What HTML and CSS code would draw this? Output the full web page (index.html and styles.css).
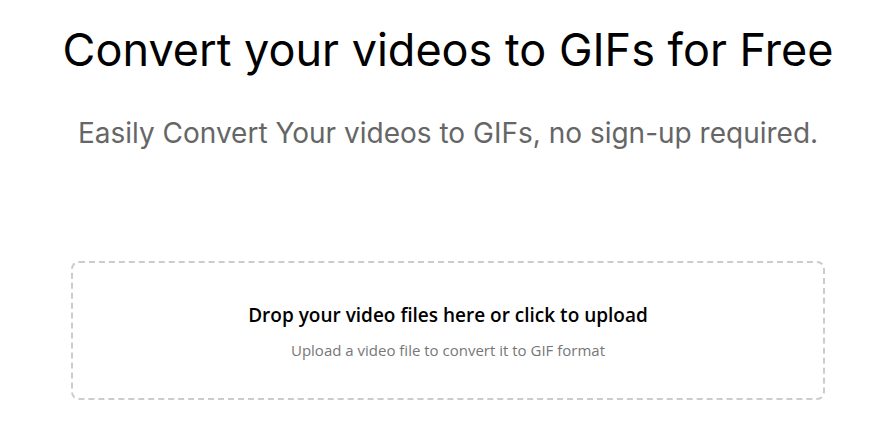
FILE: index.html
```html
<!DOCTYPE html>
<html>
<head>
<meta charset="utf-8">
<link rel="stylesheet" href="styles.css">
</head>
<body>
<main class="page">
  <h1 class="title">Convert your videos to GIFs for Free</h1>
  <p class="subtitle">Easily Convert Your videos to GIFs, no sign-up required.</p>
  <div class="dropzone">
    <p class="drop-main">Drop your video files here or click to upload</p>
    <p class="drop-sub">Upload a video file to convert it to GIF format</p>
  </div>
</main>
</body>
</html>
```

FILE: styles.css
```css
html, body { margin: 0; padding: 0; background: #fff; }
.page {
  padding-left: 18px;
  display: flex;
  flex-direction: column;
  align-items: center;
}
.title {
  font-family: "Inter", sans-serif;
  font-weight: 400;
  font-size: 45px;
  line-height: 56px;
  color: #000;
  margin: 22px 0 0;
}
.subtitle {
  font-family: "Inter", sans-serif;
  font-size: 28px;
  line-height: 34px;
  color: #666;
  margin: 38px 0 0;
}
.dropzone {
  box-sizing: border-box;
  width: 754px;
  height: 139px;
  margin-top: 111px;
  border: 2px dashed #ccc;
  border-radius: 8px;
  display: flex;
  flex-direction: column;
  align-items: center;
  justify-content: center;
  font-family: "Open Sans", sans-serif;
}
.drop-main {
  margin: 0;
  font-size: 19px;
  line-height: 26px;
  font-weight: 600;
  color: #000;
}
.drop-sub {
  margin: 12px 0 0;
  font-size: 15px;
  line-height: 20px;
  color: #777;
}
```
